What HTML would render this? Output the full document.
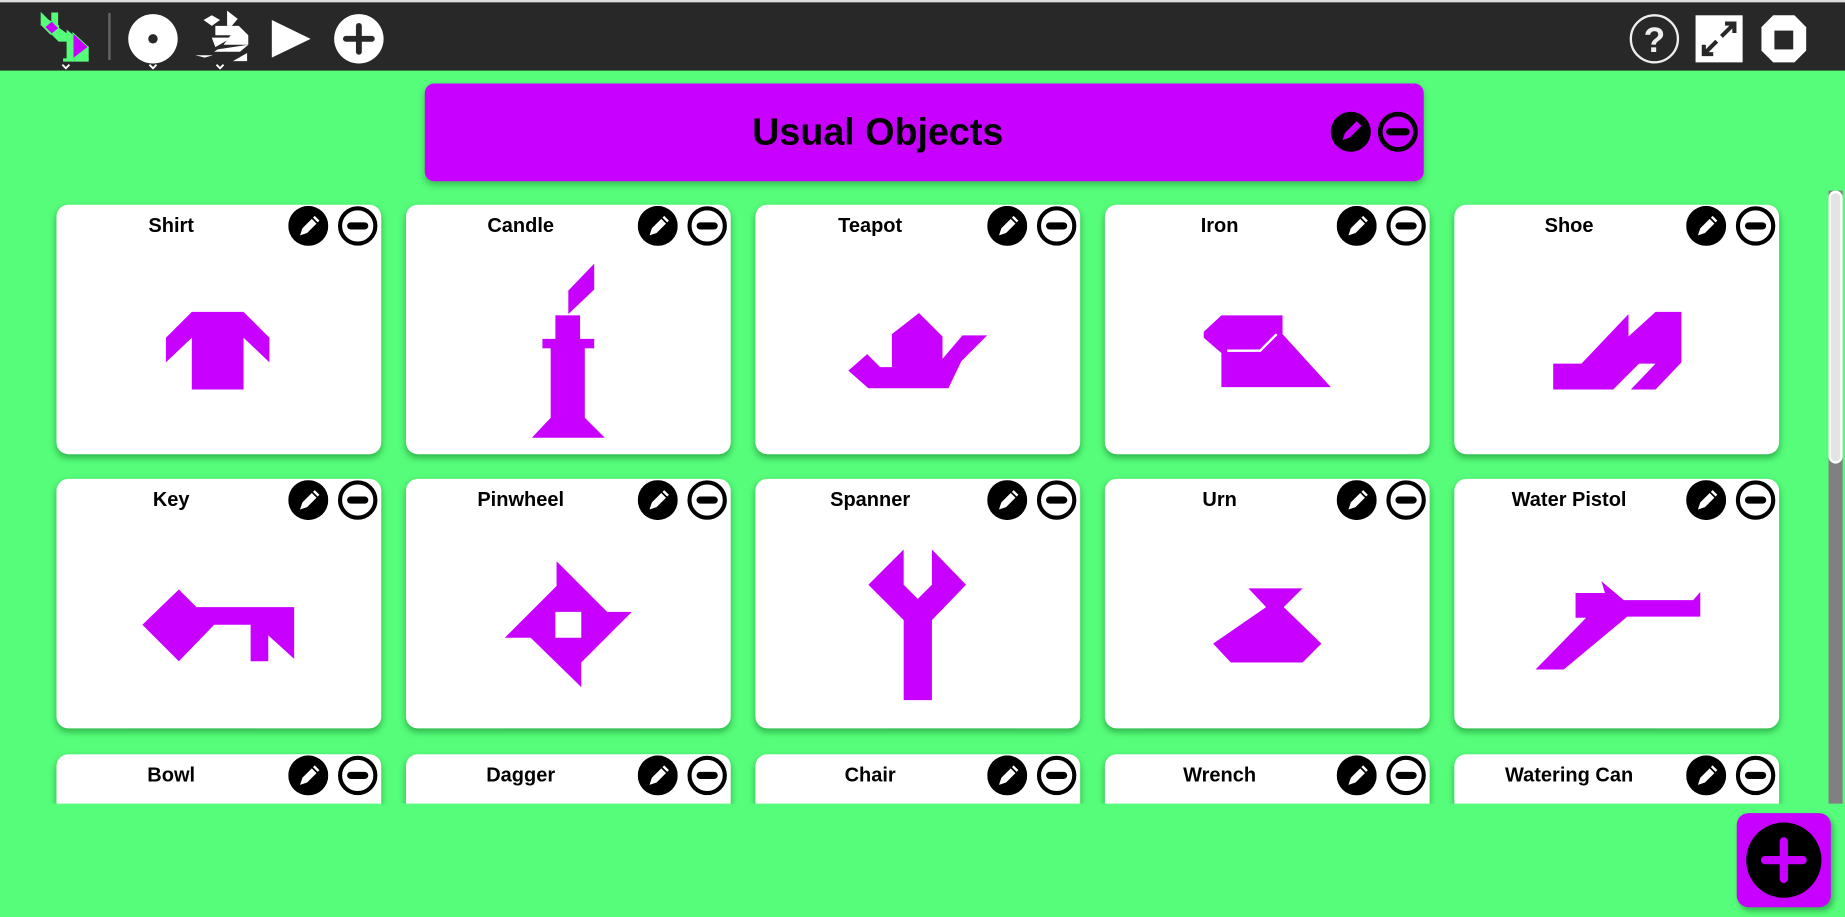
<!DOCTYPE html>
<html><head><meta charset="utf-8"><style>
html,body{margin:0;padding:0;width:1845px;height:917px;overflow:hidden;background:#56fd7a;font-family:"Liberation Sans",sans-serif}
#s{position:absolute;left:0;top:0;width:1568px;height:779px;overflow:hidden;transform:scale(1.17666);transform-origin:0 0}
.tb{position:absolute;left:0;top:0;width:1568px;height:60px;background:#282828;border-top:2px solid #ddd;box-sizing:border-box}
.title{position:absolute;left:361px;top:71px;width:849px;height:83px;background:#c800ff;border-radius:8px;box-shadow:0 3px 6px rgba(0,80,20,.35);line-height:82px;font-weight:bold;font-size:32px;color:#000}
.title span{position:absolute;left:0;width:770px;text-align:center}
.list{position:absolute;left:0;top:160px;width:1550px;height:523px;overflow:hidden}
.card{position:absolute;width:276px;height:212px;background:#fff;border-radius:10px;box-shadow:0 3px 6px rgba(0,90,20,.45)}
.card .n{position:absolute;left:0;width:195px;top:8px;text-align:center;font-weight:bold;font-size:17px}
.b{position:absolute;top:1px;width:34px;height:34px}
.sb{position:absolute;left:1554px;top:162px;width:12px;height:521px;background:#808080}
.th{position:absolute;left:1554px;top:162px;width:12px;height:232px;background:#e4e4e4;border:2px solid #fff;box-sizing:border-box;border-radius:6px}
.fab{position:absolute;left:1476px;top:691px;width:80px;height:80px;background:#c800ff;border-radius:10px;box-shadow:2px 3px 5px rgba(0,80,20,.4)}
</style></head><body><div id="s">
<div class="tb">
<svg width="420" height="60" style="position:absolute;left:0;top:-2px">
<g stroke="#56fd7a" stroke-width="0.8">
<polygon points="35,11 41,17 35,21" fill="#56fd7a"/><polygon points="44,11 49,11 49,21 44,17" fill="#56fd7a"/>
<polygon points="35,21 41,17 50,22 49,25 43,29" fill="#56fd7a"/>
<polygon points="38,23 44,18 50,24 44,29" fill="#c800ff"/>
<polygon points="44,29 50,24 57,29 57,35 50,35" fill="#56fd7a"/>
<polygon points="57,26 57,35 62,30" fill="#56fd7a"/>
<polygon points="62,28 75,40 62,50" fill="#c800ff"/>
<polygon points="62,50 75,40 75,50 68,50" fill="#56fd7a"/>
<polygon points="57,35 62,30 62,50 57,50" fill="#56fd7a"/>
<polygon points="54,50 75,50 75,52 54,52" fill="#56fd7a"/></g>
<path d="M53,55 l3,3 l3,-3" stroke="#fff" stroke-width="1.6" fill="none"/>
<rect x="92" y="11" width="2" height="40" fill="#666"/>
<circle cx="130" cy="33" r="21" fill="#fff"/><circle cx="130" cy="33" r="4" fill="#282828"/>
<path d="M127,55 l3,3 l3,-3" stroke="#fff" stroke-width="1.6" fill="none"/>
<g fill="#fff"><polygon points="173,17 180,13 187,17 180,22"/><polygon points="193,9 202,16 197,22 193,22"/><polygon points="183,22 203,22 211,30 211,38 190,38 196,30 183,30"/><polygon points="180,32 197,32 183,40"/><polygon points="185,42 211,38 204,44 182,44"/><polygon points="166,47 181,47 174,49"/><polygon points="198,52 210,52 210,45"/></g>
<path d="M184,55 l3,3 l3,-3" stroke="#fff" stroke-width="1.6" fill="none"/>
<polygon points="231,17 264,33 231,49" fill="#fff"/>
<circle cx="305" cy="33" r="21" fill="#fff"/><path d="M305,22 v22 M294,33 h22" stroke="#282828" stroke-width="5" stroke-linecap="round"/>
</svg>
<svg width="170" height="60" style="position:absolute;left:1380px;top:-2px">
<circle cx="26" cy="33" r="20" fill="none" stroke="#eee" stroke-width="2"/>
<text x="26" y="44" text-anchor="middle" font-family="Liberation Sans" font-weight="bold" font-size="30" fill="#eee">?</text>
<rect x="61" y="13" width="40" height="40" fill="#fff"/>
<path d="M83,31 L93,21 M86,20 h8 v8 M79,35 L69,45 M68,38 v8 h8" stroke="#282828" stroke-width="3.5" fill="none"/>
<polygon points="127,13 145,13 155,23 155,43 145,53 127,53 117,43 117,23" fill="#fff"/>
<rect x="128" y="26" width="16" height="16" fill="#282828"/>
</svg>
</div>
<div class="title"><span>Usual Objects</span>
<svg width="80" height="40" style="position:absolute;left:768px;top:22px"><circle cx="19" cy="19" r="17" fill="#000"/><path d="M12,26 l2,-6 l9,-9 l4,4 l-9,9 z M23,11 l1,-1 l4,4 l-1,1" fill="#c800ff"/><circle cx="59" cy="19" r="15" fill="none" stroke="#000" stroke-width="4"/><rect x="49" y="16" width="20" height="6" rx="3" fill="#000"/></svg>
</div>
<div class="list" id="list"></div>
<div class="sb"></div><div class="th"></div>
<div class="fab"><svg width="80" height="80"><circle cx="40" cy="40" r="32" fill="#000"/><path d="M40,24 v32 M24,40 h32" stroke="#c800ff" stroke-width="7" stroke-linecap="round"/></svg></div>
</div>
<script>
var names=["Shirt","Candle","Teapot","Iron","Shoe","Key","Pinwheel","Spanner","Urn","Water Pistol","Bowl","Dagger","Chair","Wrench","Watering Can"];
var xs=[48,345,642,939,1236],ys=[174,407,641];
var shapes=[
'<polygon points="163,265 207,265 229,287 229,308 207,287 207,331 163,331 163,287 141,308 141,287"/>',
'<polygon points="483,247 505,224 505,246 483,267"/><rect x="472" y="268" width="21" height="22"/><rect x="461" y="288" width="44" height="8"/><rect x="468" y="294" width="29" height="62"/><polygon points="452,372 468,355 497,355 514,372"/>',
'<polygon points="721,315 737,301 748,312 758,312 758,284 781,266 801,286 801,305 818,285 839,285 817,307 806,330 738,330"/>',
'<polygon points="1023,282 1038,268 1090,268 1090,284 1131,329 1038,329 1038,300 1023,287"/><path d="M1043,298 h28 l14,-14" stroke="#fff" stroke-width="2" fill="none"/>',
'<polygon points="1320,309 1344,309 1384,267 1384,286 1407,265 1429,265 1429,308 1407,331 1386,331 1407,309 1393,309 1371,331 1320,331"/>',
'<polygon points="121,531 152,501 167,516 250,516 250,560 228,540 228,562 213,562 213,531 182,531 152,562"/>',
'<polygon points="429,542 473,498 473,477 516,520 537,520 494,563 494,584 451,542"/><rect x="472" y="520" width="22" height="22" fill="#fff"/>',
'<polygon points="738,497 768,467 768,497 780,509 792,497 792,467 821,497 792,527 792,595 768,595 768,527"/>',
'<polygon points="1061,500 1107,500 1091,516 1123,547 1107,563 1046,563 1031,547 1076,516"/>',
'<polygon points="1305,569 1348,525 1339,525 1339,504 1364,504 1361,494 1380,510 1439,510 1445,503 1445,524 1383,524 1329,569"/>'
];
var h='';
for(var i=0;i<15;i++){var x=xs[i%5],y=ys[Math.floor(i/5)]-160;
h+='<div class="card" style="left:'+x+'px;top:'+y+'px"><div class="n">'+names[i]+'</div>'+
'<svg class="b" style="left:197px"><circle cx="17" cy="17" r="17" fill="#000"/><path d="M10,25 l2,-6 l8,-8 l4,4 l-8,8 z M21,10 l1.5,-1.5 l4,4 l-1.5,1.5" fill="#fff"/></svg>'+
'<svg class="b" style="left:239px"><circle cx="17" cy="17" r="15" fill="none" stroke="#000" stroke-width="3.5"/><rect x="8" y="14" width="18" height="6" rx="3" fill="#000"/></svg></div>';}
h+='<svg width="1550" height="523" style="position:absolute;left:0;top:0"><g fill="#c800ff" transform="translate(0,-160)">'+shapes.join('')+'</g></svg>';
document.getElementById('list').innerHTML=h;
</script>
</body></html>
